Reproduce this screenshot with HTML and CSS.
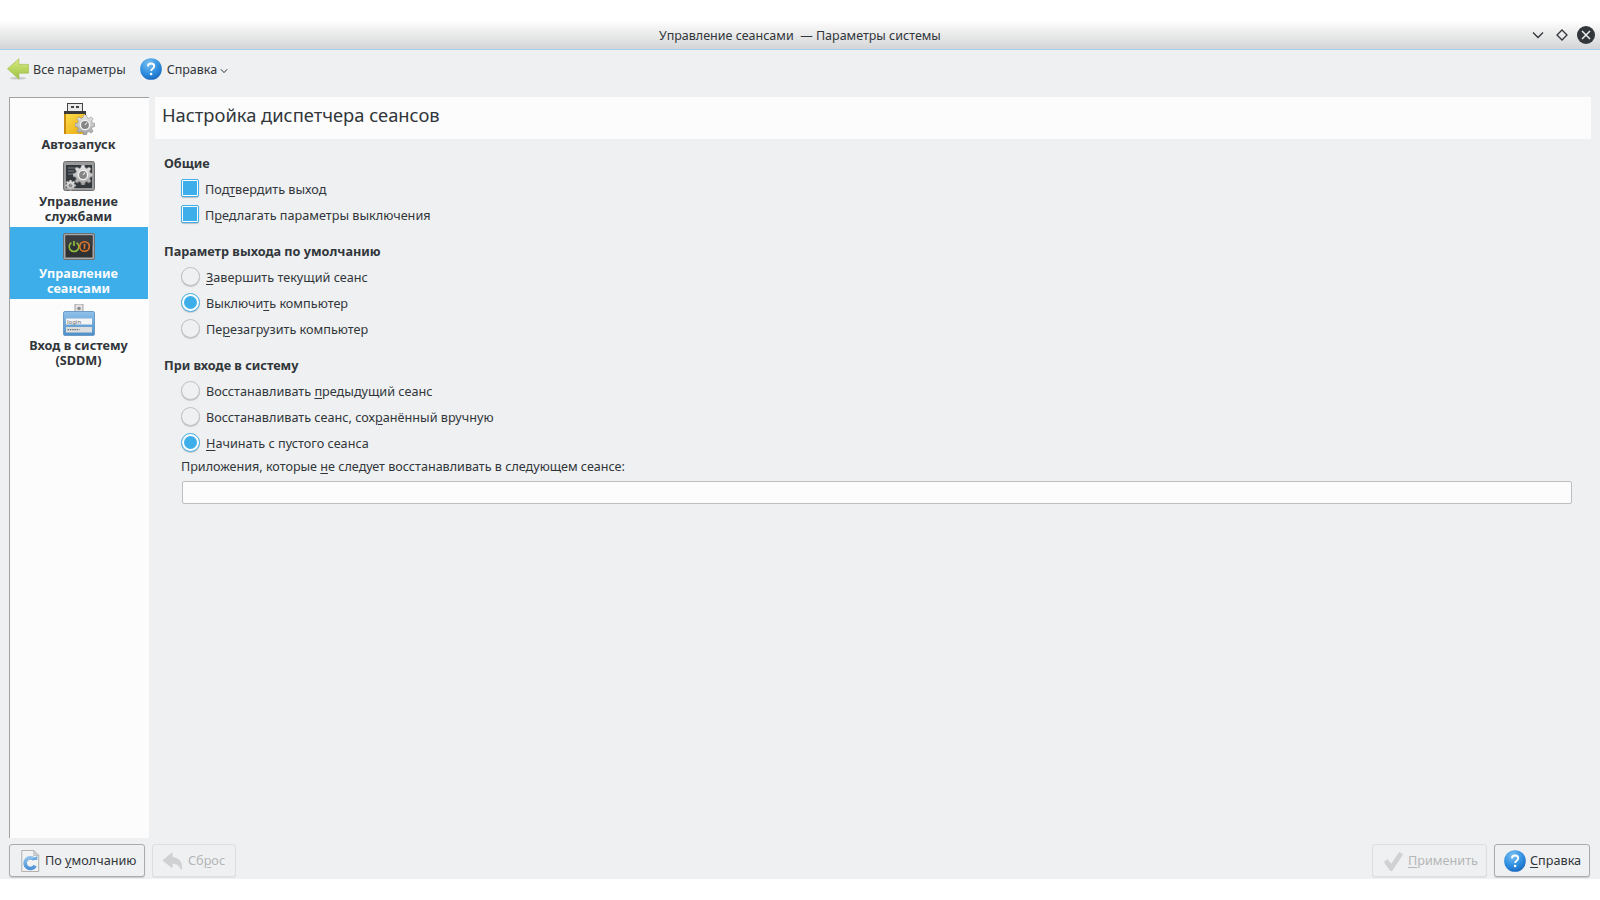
FILE: index.html
```html
<!DOCTYPE html>
<html lang="ru">
<head>
<meta charset="utf-8">
<title>Управление сеансами — Параметры системы</title>
<link rel="stylesheet" href="styles.css">
</head>
<body>
<svg class="defs" width="0" height="0" aria-hidden="true">
  <defs>
    <radialGradient id="helpGrad" cx="40%" cy="25%" r="85%">
      <stop offset="0" stop-color="#7cc0f0"/><stop offset="0.55" stop-color="#2f8fe0"/><stop offset="1" stop-color="#1560b8"/>
    </radialGradient>
    <linearGradient id="arrowGrad" x1="0" y1="0" x2="0" y2="1">
      <stop offset="0" stop-color="#d8ea80"/><stop offset="1" stop-color="#9cc243"/>
    </linearGradient>
    <linearGradient id="folderGrad" x1="0" y1="0" x2="1" y2="1">
      <stop offset="0" stop-color="#ffdf4d"/><stop offset="1" stop-color="#e8a90f"/>
    </linearGradient>
    <linearGradient id="cogGrad" x1="0" y1="0" x2="0" y2="1">
      <stop offset="0" stop-color="#ececec"/><stop offset="1" stop-color="#a0a0a0"/>
    </linearGradient>
    <linearGradient id="panelGrad" x1="0" y1="0" x2="0" y2="1">
      <stop offset="0" stop-color="#8fc1ea"/><stop offset="1" stop-color="#4f8fc8"/>
    </linearGradient>
    <linearGradient id="refreshGrad" x1="0" y1="0" x2="0" y2="1">
      <stop offset="0" stop-color="#8cc0ea"/><stop offset="1" stop-color="#4d93d6"/>
    </linearGradient>
    <symbol id="help" viewBox="0 0 24 24">
      <circle cx="12" cy="12" r="11.800" fill="url(#helpGrad)"/>
      <path d="M8.600 9.200c.2-2 1.600-3.200 3.500-3.200 2 0 3.400 1.200 3.400 2.900 0 1.400-.8 2.100-1.800 2.800-1 .7-1.500 1.200-1.500 2.500" fill="none" stroke="#fff" stroke-width="2"/>
      <circle cx="12.100" cy="17.500" r="1.400" fill="#fff"/>
    </symbol>
    <symbol id="cog" viewBox="0 0 20 20">
      <path d="M8.500 0h3l.5 2.600 1.900.8L16.100 1.900l2 2-1.500 2.200.8 1.900L20 8.500v3l-2.600.5-.8 1.900 1.500 2.200-2 2-2.200-1.500-1.900.8-.5 2.600h-3L8 17.400l-1.900-.8-2.200 1.500-2-2 1.500-2.200-.8-1.900L0 11.500v-3L2.600 8l.8-1.900-1.500-2.200 2-2 2.200 1.500L8 2.600z" fill="url(#cogGrad)" stroke="#8a8a8a" stroke-width=".6"/>
      <circle cx="10" cy="10" r="4.600" fill="#858585" stroke="#f2f2f2" stroke-width="1.400"/>
      <path d="M10 10l2-2.500" stroke="#eee" stroke-width="1.100"/>
    </symbol>
  </defs>
</svg>

<header class="titlebar">
  <span class="window-title">Управление сеансами &nbsp;— Параметры системы</span>
  <div class="window-controls">
    <svg class="wc" viewBox="0 0 14 14"><path d="M2 4.500l5 5 5-5" fill="none" stroke="#31363b" stroke-width="1.300"/></svg>
    <svg class="wc" viewBox="0 0 14 14"><path d="M7 2l5 5-5 5-5-5z" fill="none" stroke="#31363b" stroke-width="1.300"/></svg>
    <svg class="wc wc-close" viewBox="0 0 18 18"><circle cx="9" cy="9" r="9" fill="#31363b"/><path d="M5 5l8 8M13 5l-8 8" stroke="#eff0f1" stroke-width="1.500"/></svg>
  </div>
</header>

<div class="window">
  <nav class="toolbar">
    <span class="tool tool-back">
      <svg class="tool-icon" viewBox="0 0 24 24"><ellipse cx="12" cy="22" rx="9" ry="1.500" fill="#000" opacity=".15"/><path d="M13 .8v6.200h10.500v9.500H13V23L.5 11.800z" fill="url(#arrowGrad)" stroke="#a0bd50" stroke-width=".7"/></svg>
      <span>Все параметры</span>
    </span>
    <span class="tool tool-help">
      <svg class="tool-icon"><use href="#help"/></svg>
      <span>Справка</span>
      <svg class="caret" viewBox="0 0 8 6"><path d="M.8 1.200L4 4.600l3.200-3.400" fill="none" stroke="#31363b" stroke-width="1"/></svg>
    </span>
  </nav>

  <div class="workspace">
    <aside class="sidebar">
      <div class="side-item side-auto">
        <svg class="side-icon" viewBox="0 0 32 32">
          <rect x="4.500" y="0.500" width="15" height="9" fill="#e9e9e9" stroke="#444"/>
          <rect x="8" y="3" width="3" height="2" fill="#444"/><rect x="13" y="3" width="3" height="2" fill="#444"/>
          <path d="M1 8h22v5H1z" fill="#3a3a3a"/>
          <rect x="1" y="11" width="21" height="20" fill="url(#folderGrad)"/>
          <path d="M1 11v20h2V11z" fill="#c88a10"/>
          <use href="#cog" x="12" y="12" width="20" height="20"/>
        </svg>
        <span>Автозапуск</span>
      </div>
      <div class="side-item side-services">
        <svg class="side-icon" viewBox="0 0 32 32">
          <rect x=".5" y=".5" width="31" height="29" rx="2" fill="#9a9a9a" stroke="#6e6e6e"/>
          <rect x="3" y="4" width="26" height="23" fill="#33383d"/>
          <path d="M5 7h8M5 10h6M5 13h7" stroke="#7d8389"/>
          <use href="#cog" x="10" y="4" width="20" height="20"/>
          <use href="#cog" x="2" y="19" width="11" height="11"/>
        </svg>
        <span>Управление<br>службами</span>
      </div>
      <div class="side-item side-sessions is-active">
        <svg class="side-icon" viewBox="0 0 32 32">
          <rect x=".5" y="1.500" width="31" height="26" rx="1.500" fill="#a8a8a8" stroke="#6f6f6f"/>
          <rect x="2.500" y="3.500" width="27" height="22" fill="#2f3031"/>
          <path d="M2.500 3.500h27v10h-27z" fill="#3b3c3d"/>
          <path d="M8.400 10.700a4.800 4.800 0 1 0 5.200 0" fill="none" stroke="#8fc03f" stroke-width="1.600"/>
          <path d="M11 9v5" stroke="#8fc03f" stroke-width="1.600"/>
          <circle cx="21.500" cy="14.500" r="4.800" fill="none" stroke="#e0772c" stroke-width="1.600"/>
          <path d="M21.500 12v5" stroke="#e0772c" stroke-width="1.600"/>
        </svg>
        <span>Управление<br>сеансами</span>
      </div>
      <div class="side-item side-login">
        <svg class="side-icon" viewBox="0 0 32 32">
          <rect x="12" y="0" width="8" height="11" fill="#e3e3e3" stroke="#a0a0a0"/>
          <circle cx="16" cy="4.500" r="1.800" fill="#8d8d8d"/>
          <rect x=".5" y="7.500" width="31" height="24" rx="1.500" fill="url(#panelGrad)" stroke="#6d9cc6"/>
          <rect x="3" y="14.500" width="26" height="6" fill="#f4f4f4"/>
          <rect x="3" y="23" width="26" height="5.500" fill="#dedede"/>
          <text class="login-word" x="4" y="19.500">login</text>
          <path d="M4.500 25.700h12" stroke="#727272" stroke-dasharray="1.500 .8" stroke-width="1.300"/>
        </svg>
        <span>Вход в систему<br>(SDDM)</span>
      </div>
    </aside>

    <main class="panel">
      <h1 class="panel-title">Настройка диспетчера сеансов</h1>
      <div class="form">
        <h2 class="group-title">Общие</h2>
        <label class="row"><span class="check"></span><span class="row-label">Под<u>т</u>вердить выход</span></label>
        <label class="row"><span class="check"></span><span class="row-label">П<u>р</u>едлагать параметры выключения</span></label>

        <h2 class="group-title group-gap">Параметр выхода по умолчанию</h2>
        <label class="row"><span class="radio"></span><span class="row-label"><u>З</u>авершить текущий сеанс</span></label>
        <label class="row"><span class="radio is-on"></span><span class="row-label">Выключи<u>т</u>ь компьютер</span></label>
        <label class="row"><span class="radio"></span><span class="row-label">Пе<u>р</u>езагрузить компьютер</span></label>

        <h2 class="group-title group-gap">При входе в систему</h2>
        <label class="row"><span class="radio"></span><span class="row-label">Восстанавливать <u>п</u>редыдущий сеанс</span></label>
        <label class="row"><span class="radio"></span><span class="row-label">Восстанавливать сеанс, сох<u>р</u>анённый вручную</span></label>
        <label class="row"><span class="radio is-on"></span><span class="row-label"><u>Н</u>ачинать с пустого сеанса</span></label>
        <p class="field-label">Приложения, которые <u>н</u>е следует восстанавливать в следующем сеансе:</p>
        <div class="field"></div>
      </div>
    </main>
  </div>

  <footer class="buttons">
    <button class="btn btn-defaults">
      <svg class="btn-icon" viewBox="0 0 22 24">
        <path d="M2 .5h13l5.500 5.500v17.500H2z" fill="#f2f2f2" stroke="#a8a8a8"/>
        <path d="M15 .5V6h5.500z" fill="#d2d2d2" stroke="#a8a8a8" stroke-width=".6"/>
        <path d="M15.800 10.500a5.800 5.800 0 1 0 .8 6.500" fill="none" stroke="url(#refreshGrad)" stroke-width="4"/>
        <path d="M11.500 11h7.500V6.500z" fill="#6aa8e0"/>
      </svg>
      <span>По <u>у</u>молчанию</span>
    </button>
    <button class="btn btn-reset is-disabled">
      <svg class="btn-icon" viewBox="0 0 24 24"><path d="M11 3L1 11.500 11 19v-4.500c4 0 7 .8 10 6.500 1.500-7-2-12-10-13z" fill="#cfd1d3" stroke="#c4c6c8" stroke-width=".6"/></svg>
      <span>Сб<u>р</u>ос</span>
    </button>
    <span class="spacer"></span>
    <button class="btn btn-apply is-disabled">
      <svg class="btn-icon" viewBox="0 0 24 24"><path d="M2 13l4-3 4 5L19 2l4 3-12 18h-2z" fill="#cfd1d3"/></svg>
      <span><u>П</u>рименить</span>
    </button>
    <button class="btn btn-help">
      <svg class="btn-icon"><use href="#help"/></svg>
      <span><u>С</u>правка</span>
    </button>
  </footer>
</div>
<div class="bottom-strip"></div>
</body>
</html>
```

FILE: styles.css
```css
* { box-sizing: border-box; }

html, body { margin: 0; padding: 0; }

body {
  width: 1600px;
  height: 900px;
  overflow: hidden;
  display: flex;
  flex-direction: column;
  background: #fff;
  color: #31363b;
  font-family: "Noto Sans", sans-serif;
  font-size: 12.670px;
  line-height: 15px;
}

.defs { position: absolute; }

u { text-underline-offset: 2px; text-decoration-thickness: 1px; }

.titlebar {
  flex: none;
  height: 50px;
  display: flex;
  align-items: flex-end;
  justify-content: center;
  padding-bottom: 6px;
  background: linear-gradient(#fff 0, #fff 20px, #d4d5d6 49px);
  border-bottom: 1px solid #a5cfee;
  position: relative;
}

.window-title { font-size: 12.500px; }

.window-controls {
  position: absolute;
  right: 5px;
  top: 26px;
  display: flex;
  align-items: center;
  gap: 8px;
}

.wc { width: 14px; height: 14px; display: block; }
.wc:first-child { margin-right: 2px; }
.wc-close { width: 18px; height: 18px; }

.window {
  flex: 1;
  display: flex;
  flex-direction: column;
  min-height: 0;
  background: #eff0f1;
}

.bottom-strip { flex: none; height: 21px; background: #fff; }

.toolbar {
  flex: none;
  height: 47px;
  display: flex;
  align-items: center;
  padding: 0 0 9px 7px;
  gap: 14px;
  font-size: 12.500px;
}

.tool { display: inline-flex; align-items: center; gap: 4px; }
.tool-help { gap: 5px; }
.tool-icon { width: 22px; height: 22px; display: block; }
.caret { width: 8px; height: 6px; margin: 4px 0 0 -2px; }

.workspace {
  flex: 1;
  min-height: 0;
  display: flex;
  gap: 6px;
  padding: 0 9px 0 9px;
}

.sidebar {
  flex: none;
  width: 140px;
  background: #fcfcfc;
  border-left: 1px solid #a0a2a4;
  border-top: 1px solid #a0a2a4;
  font-weight: 700;
  text-align: center;
}

.side-item {
  display: flex;
  flex-direction: column;
  align-items: center;
  padding-right: 2px;
}

.side-icon { width: 32px; height: 32px; display: block; flex: none; }

.login-word {
  font-family: "Noto Sans", sans-serif;
  font-size: 6px;
  font-weight: 400;
  fill: #6b6b6b;
}

.side-auto { height: 59px; padding-top: 5px; }
.side-auto span { margin-top: 2px; }
.side-services { height: 70px; padding-top: 4px; }
.side-services span { margin-top: 1px; }
.side-sessions { height: 72px; padding-top: 5px; padding-right: 1px; margin-right: 1px; }
.side-sessions span { margin-top: 2px; }
.side-login { padding-top: 5px; }
.side-login span { margin-top: 2px; }

.is-active { background: #3daee9; color: #fcfcfc; }

.panel { flex: 1; min-width: 0; display: flex; flex-direction: column; }

.panel-title {
  margin: 0;
  height: 42px;
  flex: none;
  display: flex;
  align-items: center;
  padding: 0 0 6px 7px;
  background: #fcfcfc;
  font-size: 18.330px;
  font-weight: 400;
  line-height: 24px;
}

.form { padding: 17px 19px 0 9px; }

.group-title {
  margin: 0;
  font-size: 12.670px;
  font-weight: 700;
  line-height: 15px;
  height: 15px;
}

.group-gap { margin-top: 16px; }

.row {
  display: flex;
  align-items: center;
  height: 26px;
  margin-left: 17px;
}

.group-title + .row { margin-top: 5px; }

.row-label { margin-left: 6px; }

.check {
  flex: none;
  width: 18px;
  height: 18px;
  margin-bottom: 2px;
  border: 1px solid #3daee9;
  border-radius: 2px;
  background: #fcfcfc;
  box-shadow: 0 1px 1px rgba(0, 0, 0, .2);
  display: flex;
  align-items: center;
  justify-content: center;
}

.check::before {
  content: "";
  width: 14px;
  height: 14px;
  background: #3daee9;
}

.radio {
  flex: none;
  width: 19px;
  height: 19px;
  margin-bottom: 2px;
  border: 1px solid #bfc1c3;
  border-radius: 50%;
  background: #eff0f1;
  box-shadow: 0 1px 1px rgba(0, 0, 0, .18);
  display: flex;
  align-items: center;
  justify-content: center;
}

.radio.is-on { border-color: #3daee9; background: #fcfcfc; }

.radio.is-on::before {
  content: "";
  width: 13px;
  height: 13px;
  border-radius: 50%;
  background: #3daee9;
}

.field-label { margin: 3px 0 0 17px; height: 15px; font-size: 12.580px; }

.field {
  margin: 7px 0 0 18px;
  height: 23px;
  background: #fcfcfc;
  border: 1px solid #bcbebf;
  border-radius: 2px;
}

.buttons {
  flex: none;
  height: 41px;
  display: flex;
  align-items: flex-start;
  gap: 7px;
  padding: 6px 10px 0 9px;
}

.spacer { flex: 1; }

.btn {
  height: 33px;
  display: inline-flex;
  align-items: center;
  gap: 4px;
  margin: 0;
  padding: 0 9px;
  border: 1px solid #a9abad;
  border-radius: 3px;
  background: #eff0f1;
  box-shadow: 0 1px 1px rgba(0, 0, 0, .15);
  color: #31363b;
  font: inherit;
  white-space: nowrap;
}

.btn.is-disabled {
  color: #b4b6b8;
  border-color: #dcdee0;
  box-shadow: 0 1px 1px rgba(0, 0, 0, .06);
}

.btn-icon { width: 22px; height: 22px; display: block; flex: none; }

.btn-defaults { width: 136px; }
.btn-reset { width: 84px; }
.btn-apply { width: 115px; }
.btn-help { width: 96px; }
```
